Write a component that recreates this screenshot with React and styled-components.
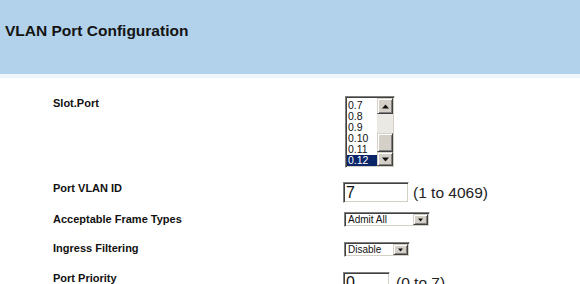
import React from "react"
import styled, { createGlobalStyle } from "styled-components"

const GlobalStyle = createGlobalStyle`
  body {
    margin: 0;
    background: #fff;
    font-family: "Liberation Sans", Arial, sans-serif;
  }
`

const Header = styled.div`
  height: 52px;
  padding: 22px 0 0 5px;
  background: #b1d2ea;
  border-bottom: 4px solid #eef6fb;
`

const Title = styled.h1`
  margin: 0;
  font-size: 15.5px;
  line-height: 18px;
  font-weight: bold;
  color: #141414;
`

const Form = styled.div`
  padding: 18px 0 0 53px;
`

const Row = styled.div`
  display: flex;
  align-items: flex-start;
  height: ${(p) => p.height || 30}px;
`

const Label = styled.div`
  width: 290px;
  flex: none;
  padding-top: ${(p) => p.offset || 0}px;
  font-size: 11px;
  line-height: 12px;
  font-weight: bold;
  color: #111;
`

const Control = styled.div`
  display: flex;
  align-items: center;
  gap: 4px;
`

const sunken = `
  border: 1px solid;
  border-color: #808080 #fff #fff #808080;
  box-shadow: inset 1px 1px #404040, inset -1px -1px #d4d0c8;
`

const raised = `
  background: #d4d0c8;
  border: 1px solid;
  border-color: #d4d0c8 #404040 #404040 #d4d0c8;
  box-shadow: inset 1px 1px #fff, inset -1px -1px #808080;
`

const ListBox = styled.div`
  ${sunken}
  display: flex;
  box-sizing: border-box;
  width: 50px;
  height: 72px;
  margin-left: 2px;
  padding: 1px;
  background: #fff;
`

const Options = styled.div`
  flex: 1;
  display: flex;
  flex-direction: column;
  padding-top: 2px;
`

const Option = styled.div`
  height: 11px;
  padding-left: 1px;
  font-size: 10.5px;
  line-height: 11px;
  color: ${(p) => (p.selected ? "#fff" : "#111")};
  background: ${(p) => (p.selected ? "#0a246a" : "transparent")};
`

const ScrollBar = styled.div`
  width: 16px;
  display: flex;
  flex-direction: column;
  background: #ebe9e4;
`

const ScrollButton = styled.div`
  ${raised}
  box-sizing: border-box;
  height: ${(p) => p.size || 16}px;
  display: flex;
  align-items: center;
  justify-content: center;
`

const Track = styled.div`
  flex: ${(p) => p.grow || 1};
`

const TextBox = styled.input`
  ${sunken}
  box-sizing: border-box;
  width: ${(p) => p.width}px;
  height: 21px;
  padding: 0 2px;
  font-family: "Liberation Sans", Arial, sans-serif;
  font-size: 16px;
  color: #111;
  outline: none;
`

const Hint = styled.span`
  font-size: 15.5px;
  color: #222;
  margin-left: ${(p) => p.space || 0}px;
`

const SelectBox = styled.div`
  ${sunken}
  box-sizing: border-box;
  width: ${(p) => p.width}px;
  height: 15px;
  margin-left: 1px;
  display: flex;
  align-items: center;
  justify-content: space-between;
  padding: 1px 1px 1px 3px;
  background: #fff;
`

const SelectText = styled.span`
  font-size: 10px;
  line-height: 11px;
  color: #111;
`

const DropButton = styled.div`
  ${raised}
  box-sizing: border-box;
  width: 15px;
  height: 11px;
  display: flex;
  align-items: center;
  justify-content: center;
`

const Arrow = ({ up, size = 7 }) => (
  <svg width={size} height={Math.ceil(size / 2) + 1} viewBox="0 0 7 4">
    <path d={up ? "M0 4 L3.5 0 L7 4 Z" : "M0 0 L7 0 L3.5 4 Z"} fill="#111" />
  </svg>
)

const Select = ({ width, value }) => (
  <SelectBox width={width}>
    <SelectText>{value}</SelectText>
    <DropButton>
      <Arrow size={5} />
    </DropButton>
  </SelectBox>
)

const ports = ["0.7", "0.8", "0.9", "0.10", "0.11", "0.12"]

export default function App() {
  return (
    <>
      <GlobalStyle />
      <Header>
        <Title>VLAN Port Configuration</Title>
      </Header>
      <Form>
        <Row height={86}>
          <Label offset={1}>Slot.Port</Label>
          <ListBox>
            <Options>
              {ports.map((p) => (
                <Option key={p} selected={p === "0.12"}>
                  {p}
                </Option>
              ))}
            </Options>
            <ScrollBar>
              <ScrollButton>
                <Arrow up />
              </ScrollButton>
              <Track grow={20} />
              <ScrollButton size={19} />
              <ScrollButton size={14}>
                <Arrow />
              </ScrollButton>
            </ScrollBar>
          </ListBox>
        </Row>
        <Row>
          <Label>Port VLAN ID</Label>
          <Control>
            <TextBox width={66} defaultValue="7" readOnly />
            <Hint>(1 to 4069)</Hint>
          </Control>
        </Row>
        <Row>
          <Label offset={1}>Acceptable Frame Types</Label>
          <Control>
            <Select width={86} value="Admit All" />
          </Control>
        </Row>
        <Row>
          <Label>Ingress Filtering</Label>
          <Control>
            <Select width={66} value="Disable" />
          </Control>
        </Row>
        <Row>
          <Label>Port Priority</Label>
          <Control>
            <TextBox width={47} defaultValue="0" readOnly />
            <Hint space={2}>(0 to 7)</Hint>
          </Control>
        </Row>
      </Form>
    </>
  )
}
